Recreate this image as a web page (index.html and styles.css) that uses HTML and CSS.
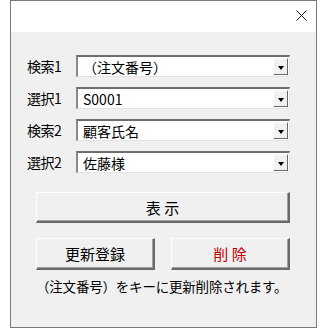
FILE: index.html
```html
<!DOCTYPE html>
<html lang="ja">

<head>
  <meta charset="UTF-8">
  <title>検索フォーム</title>
  <link rel="stylesheet" href="styles.css">
</head>

<body>
  <div class="window">
    <div class="titlebar">
      <svg class="close" width="11" height="11" viewBox="0 0 11 11">
        <path d="M0.5 0.5 L10.5 10.5 M10.5 0.5 L0.5 10.5" stroke="#1a1a1a" stroke-width="1" fill="none" />
      </svg>
    </div>

    <div class="client">
      <div class="fields">
        <label class="field-label">検索1</label>
        <div class="combo">
          <span class="combo-text">（注文番号）</span>
          <span class="drop"><span class="arrow"></span></span>
        </div>

        <label class="field-label">選択1</label>
        <div class="combo">
          <span class="combo-text">S0001</span>
          <span class="drop"><span class="arrow"></span></span>
        </div>

        <label class="field-label">検索2</label>
        <div class="combo">
          <span class="combo-text">顧客氏名</span>
          <span class="drop"><span class="arrow"></span></span>
        </div>

        <label class="field-label">選択2</label>
        <div class="combo">
          <span class="combo-text">佐藤様</span>
          <span class="drop"><span class="arrow"></span></span>
        </div>
      </div>

      <button class="btn btn-show">表&nbsp;示</button>

      <div class="btn-row">
        <button class="btn">更新登録</button>
        <button class="btn btn-delete">削&nbsp;除</button>
      </div>

      <p class="note">（注文番号）をキーに更新削除されます。</p>
    </div>
  </div>
</body>

</html>
```

FILE: styles.css
```css
body {
  margin: 0;
  background-color: #ffffff;
  font-family: "Noto Sans CJK JP", "DejaVu Sans", sans-serif;
  color: #000;
}

.window {
  margin-left: 10px;
  width: 305px;
  height: 326px;
  border: 1px solid #7a7a7a;
  background-color: #f0f0f0;
  display: flex;
  flex-direction: column;
}

.titlebar {
  height: 31px;
  background-color: #ffffff;
  display: flex;
  justify-content: flex-end;
  align-items: center;
}

.close {
  margin-right: 9px;
  margin-top: -2px;
}

.client {
  padding: 23px 26px 0 16px;
  display: flex;
  flex-direction: column;
}

.fields {
  display: grid;
  grid-template-columns: 49px 214px;
  row-gap: 10px;
  align-items: center;
}

.field-label {
  font-size: 14px;
  line-height: 22px;
  letter-spacing: -0.5px;
}

.combo {
  height: 22px;
  box-sizing: border-box;
  background-color: #ffffff;
  border-style: solid;
  border-width: 2px 1px 1px 2px;
  border-color: #6d6d6d #e3e3e3 #e3e3e3 #8a8a8a;
  display: flex;
  align-items: center;
}

.combo-text {
  flex: 1;
  font-size: 14px;
  line-height: 18px;
  padding-left: 5px;
  white-space: nowrap;
}

.drop {
  width: 15px;
  height: 17px;
  box-sizing: border-box;
  background-color: #f0f0f0;
  border-style: solid;
  border-width: 1px;
  border-color: #ffffff #696969 #696969 #ffffff;
  display: flex;
  justify-content: center;
  align-items: center;
  margin-right: 1px;
}

.arrow {
  width: 0;
  height: 0;
  border-left: 3px solid transparent;
  border-right: 3px solid transparent;
  border-top: 4px solid #000;
  margin-top: 2px;
}

.btn {
  font-family: inherit;
  background-color: #f0f0f0;
  color: #000;
  border-style: solid;
  border-width: 1px 2px 2px 1px;
  border-color: #ffffff #6a6a6a #6a6a6a #ffffff;
  box-shadow: inset -1px -1px 0 #a0a0a0;
  padding: 0;
  font-size: 15px;
}

.btn-show {
  margin: 19px 0 0 9px;
  width: 254px;
  height: 31px;
}

.btn-row {
  display: flex;
  gap: 16px;
  margin: 15px 0 0 9px;
}

.btn-row .btn {
  width: 119px;
  height: 32px;
}

.btn-delete {
  color: #c00000;
}

.note {
  margin: 7px 0 0 9px;
  font-size: 13.5px;
  line-height: 18px;
  white-space: nowrap;
  letter-spacing: -0.2px;
}
```
